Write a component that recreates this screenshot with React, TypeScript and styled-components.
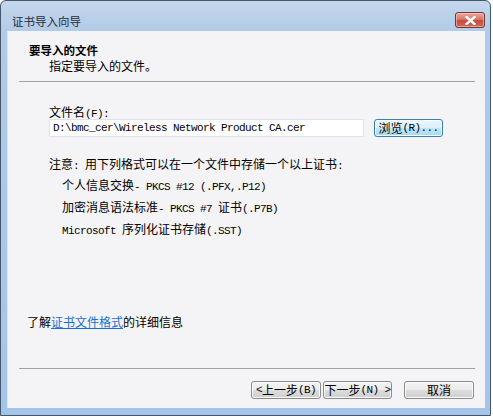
import React from "react";
import styled, { createGlobalStyle } from "styled-components";

const Global = createGlobalStyle`
  html, body { margin: 0; padding: 0; background: #ffffff; }
  body { font-family: "Noto Sans CJK SC", "Liberation Sans", sans-serif; }
`;

const CJK = `"Noto Sans CJK SC", "Liberation Sans", sans-serif`;

const Window = styled.div`
  box-sizing: border-box;
  width: 491px;
  height: 416px;
  border: 1px solid #44566a;
  border-radius: 6px 6px 0 0;
  background: linear-gradient(to bottom, #c4d7ec 0px, #b1cbe8 30px, #a5c4e9 100%);
  padding: 0 5px 7px 6px;
  display: flex;
  flex-direction: column;
  font-family: ${CJK};
  font-size: 12px;
  color: #000;
`;

const TitleBar = styled.div`
  height: 30px;
  display: flex;
  align-items: flex-start;
  justify-content: space-between;
  flex: none;
`;

const TitleText = styled.div`
  margin: 13px 0 0 5px;
  font-size: 11.5px;
  line-height: 14px;
  color: #1f2a36;
`;

const CloseBtn = styled.div`
  box-sizing: border-box;
  margin: 11px 0 0 0;
  width: 30px;
  height: 16px;
  border: 1px solid #6e3a36;
  border-radius: 3px;
  background: linear-gradient(to bottom, #e9a99d 0%, #d9776a 45%, #c54a3c 55%, #cf6c57 100%);
  box-shadow: inset 0 0 0 1px rgba(255, 220, 210, 0.5);
  display: flex;
  align-items: center;
  justify-content: center;
`;

const Client = styled.div`
  box-sizing: border-box;
  width: 478px;
  height: 377px;
  background: #f4f3f5;
  border-left: 1px solid #dde6f0;
  display: flex;
  flex-direction: column;
`;

const Header = styled.div`
  padding: 12px 0 0 21px;
  height: 50px;
  box-sizing: border-box;
`;

const HeaderTitle = styled.div`
  font-weight: bold;
  font-size: 11.5px;
  line-height: 15px;
  height: 15px;
`;

const HeaderSub = styled.div`
  margin-left: 20px;
  line-height: 15px;
  height: 15px;
`;

const Separator = styled.div`
  height: 1px;
  margin: 0 10px 0 11px;
  background: #a0a0a0;
  flex: none;
`;

const Body = styled.div`
  flex: 1;
  display: flex;
  flex-direction: column;
  padding: 23px 0 0 41px;
`;

const Label = styled.div`
  line-height: 14px;
  height: 14px;
`;

const FileRow = styled.div`
  display: flex;
  align-items: center;
  gap: 10px;
`;

const TextInput = styled.div`
  box-sizing: border-box;
  width: 315px;
  height: 18px;
  background: #ffffff;
  border: 1px solid #dfe3ea;
  padding-left: 3px;
  display: flex;
  align-items: center;
`;

const Mono = styled.span`
  font-family: "Liberation Mono", monospace;
  font-size: 11px;
  letter-spacing: -0.6px;
`;

const Button = styled.div<{ $primary?: boolean; $width?: number }>`
  box-sizing: border-box;
  width: ${(p) => p.$width ?? 70}px;
  height: 18px;
  border: 1px solid ${(p) => (p.$primary ? "#3c7fb1" : "#8a8a8a")};
  border-radius: 3px;
  background: ${(p) =>
    p.$primary
      ? "linear-gradient(to bottom, #eaf6fd 0%, #d9f0fc 50%, #bee6fd 50%, #a7d9f5 100%)"
      : "linear-gradient(to bottom, #f2f2f2 0%, #ebebeb 50%, #dddddd 50%, #cfcfcf 100%)"};
  box-shadow: inset 0 0 0 1px #fbfbfb;
  display: flex;
  align-items: center;
  justify-content: center;
  line-height: 14px;
  white-space: nowrap;
  color: #000;
`;

const Note = styled.div`
  margin-top: 16px;
  line-height: 21px;
  height: 21px;
`;

const Item = styled.div`
  margin-left: 13px;
  line-height: 22px;
  height: 22px;
`;

const LearnMore = styled.div`
  margin: 75px 0 0 -22px;
  line-height: 14px;
  height: 14px;
`;

const Link = styled.span`
  color: #1a6fd0;
  text-decoration: underline;
`;

const Footer = styled.div`
  display: flex;
  justify-content: flex-end;
  padding: 12px 11px 9px 0;
`;

const NavGroup = styled.div`
  display: flex;
  gap: 2px;
  margin-right: 12px;
`;

export default function App() {
  return (
    <>
      <Global />
      <Window>
        <TitleBar>
          <TitleText>证书导入向导</TitleText>
          <CloseBtn>
            <svg width="11" height="9" viewBox="0 0 11 9">
              <path d="M1.5 1 L9.5 8 M9.5 1 L1.5 8" stroke="#ffffff" strokeWidth="2.4" strokeLinecap="square" />
            </svg>
          </CloseBtn>
        </TitleBar>
        <Client>
          <Header>
            <HeaderTitle>要导入的文件</HeaderTitle>
            <HeaderSub>指定要导入的文件。</HeaderSub>
          </Header>
          <Separator />
          <Body>
            <Label>
              文件名<Mono>(F):</Mono>
            </Label>
            <FileRow>
              <TextInput>
                <Mono>D:\bmc_cer\Wireless Network Product CA.cer</Mono>
              </TextInput>
              <Button $primary $width={69}>
                浏览<Mono>(R)...</Mono>
              </Button>
            </FileRow>
            <Note>
              注意<Mono>: </Mono>用下列格式可以在一个文件中存储一个以上证书<Mono>:</Mono>
            </Note>
            <Item>
              个人信息交换<Mono>- PKCS #12 (.PFX,.P12)</Mono>
            </Item>
            <Item>
              加密消息语法标准<Mono>- PKCS #7 </Mono>证书<Mono>(.P7B)</Mono>
            </Item>
            <Item>
              <Mono>Microsoft </Mono>序列化证书存储<Mono>(.SST)</Mono>
            </Item>
            <LearnMore>
              了解<Link>证书文件格式</Link>的详细信息
            </LearnMore>
          </Body>
          <Separator />
          <Footer>
            <NavGroup>
              <Button>
                <Mono>&lt; </Mono>上一步<Mono>(B)</Mono>
              </Button>
              <Button $width={69}>
                下一步<Mono>(N) &gt;</Mono>
              </Button>
            </NavGroup>
            <Button>取消</Button>
          </Footer>
        </Client>
      </Window>
    </>
  );
}
